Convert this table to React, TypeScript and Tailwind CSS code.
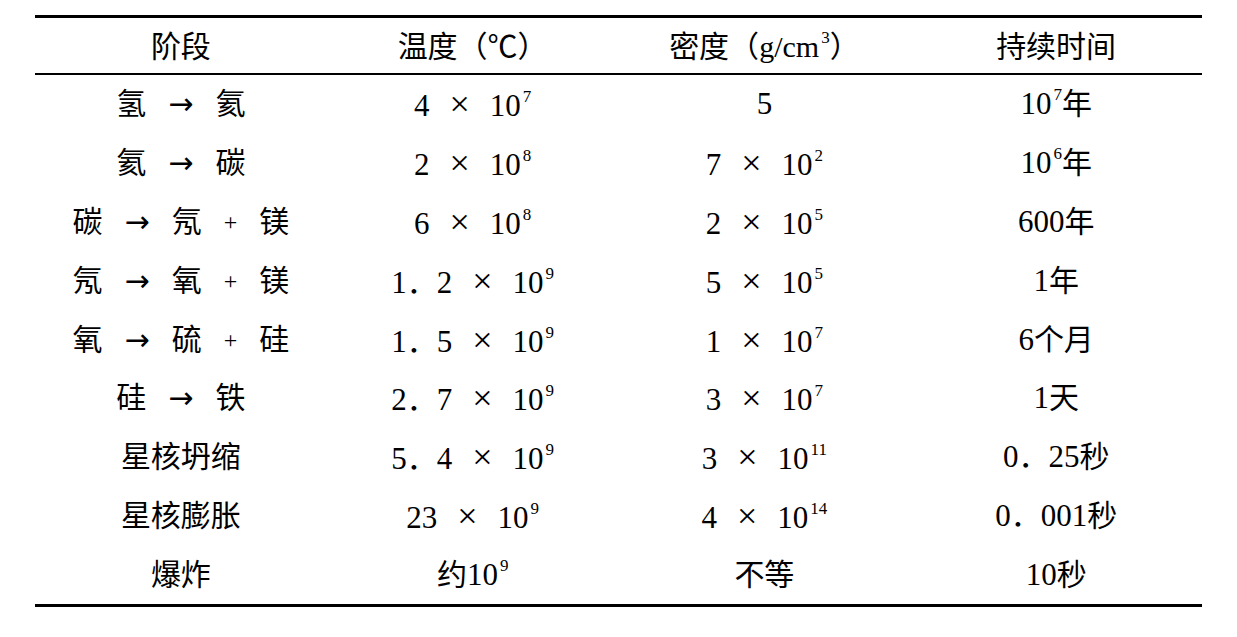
import React from 'react';

type Cell = React.ReactNode;

// latin digits go in their own flex item so they keep the serif face next to CJK text
const T = ({ s }: { s: string }) => (
  <span className="inline-flex items-baseline">
    {s.split(/([0-9]+)/).filter(Boolean).map((p, i) => (
      <span key={i} className={/[0-9]/.test(p) ? "font-['Liberation_Serif',serif] text-[31px]" : ''}>
        {p}
      </span>
    ))}
  </span>
);

const Sup = ({ children }: { children: React.ReactNode }) => (
  <span className="relative -top-[14px] ml-[2px] inline-block font-['Liberation_Serif',serif] text-[17px] leading-none">
    {children}
  </span>
);

// a × 10^e, written the way the printed table spaces it
const Sci = ({ m, e }: { m?: string; e: string }) => (
  <span className="inline-flex items-baseline">
    {m && (
      <>
        <T s={m} />
        <span className="mx-[20px] text-[36px] leading-none">×</span>
      </>
    )}
    <span className="font-['Liberation_Serif',serif] text-[31px]">10</span>
    <Sup>{e}</Sup>
  </span>
);

const Reaction = ({ parts }: { parts: string[] }) => (
  <span className="inline-flex items-center gap-[22px]">
    {parts.map((p, i) =>
      p === '→' ? (
        <span key={i} className="font-['DejaVu_Sans',sans-serif] text-[30px] leading-none">→</span>
      ) : p === '+' ? (
        <span key={i} className="text-[24px] leading-none">+</span>
      ) : (
        <span key={i}>{p}</span>
      )
    )}
  </span>
);

const rows: Cell[][] = [
  [<Reaction parts={['氢', '→', '氦']} />, <Sci m="4" e="7" />, <T s="5" />, <span className="inline-flex items-baseline"><Sci e="7" />年</span>],
  [<Reaction parts={['氦', '→', '碳']} />, <Sci m="2" e="8" />, <Sci m="7" e="2" />, <span className="inline-flex items-baseline"><Sci e="6" />年</span>],
  [<Reaction parts={['碳', '→', '氖', '+', '镁']} />, <Sci m="6" e="8" />, <Sci m="2" e="5" />, <T s="600年" />],
  [<Reaction parts={['氖', '→', '氧', '+', '镁']} />, <Sci m="1．2" e="9" />, <Sci m="5" e="5" />, <T s="1年" />],
  [<Reaction parts={['氧', '→', '硫', '+', '硅']} />, <Sci m="1．5" e="9" />, <Sci m="1" e="7" />, <T s="6个月" />],
  [<Reaction parts={['硅', '→', '铁']} />, <Sci m="2．7" e="9" />, <Sci m="3" e="7" />, <T s="1天" />],
  ['星核坍缩', <Sci m="5．4" e="9" />, <Sci m="3" e="11" />, <T s="0．25秒" />],
  ['星核膨胀', <Sci m="23" e="9" />, <Sci m="4" e="14" />, <T s="0．001秒" />],
  ['爆炸', <span className="inline-flex items-baseline">约<Sci e="9" /></span>, '不等', <T s="10秒" />],
];

const App = () => {
  return (
    <div className="w-full h-[637px] bg-white pt-[15px] text-black font-['Liberation_Serif','Noto_Sans_CJK_SC',serif]">
      <div className="mx-auto w-[1167px] border-y-[3px] border-black text-[30px] leading-[30px]">
        <div className="grid grid-cols-4 h-[57px] items-center border-b-2 border-black text-center pt-[3px]">
          <div>阶段</div>
          <div>温度（℃）</div>
          <div>
            密度（<span className="inline-block font-['Liberation_Serif',serif]">g/cm</span>
            <Sup>3</Sup>）
          </div>
          <div>持续时间</div>
        </div>
        {rows.map((row, i) => (
          <div key={i} className="grid grid-cols-4 h-[58.8px] items-center text-center">
            {row.map((cell, j) => (
              <div key={j}>{cell}</div>
            ))}
          </div>
        ))}
      </div>
    </div>
  );
};

export default App;
